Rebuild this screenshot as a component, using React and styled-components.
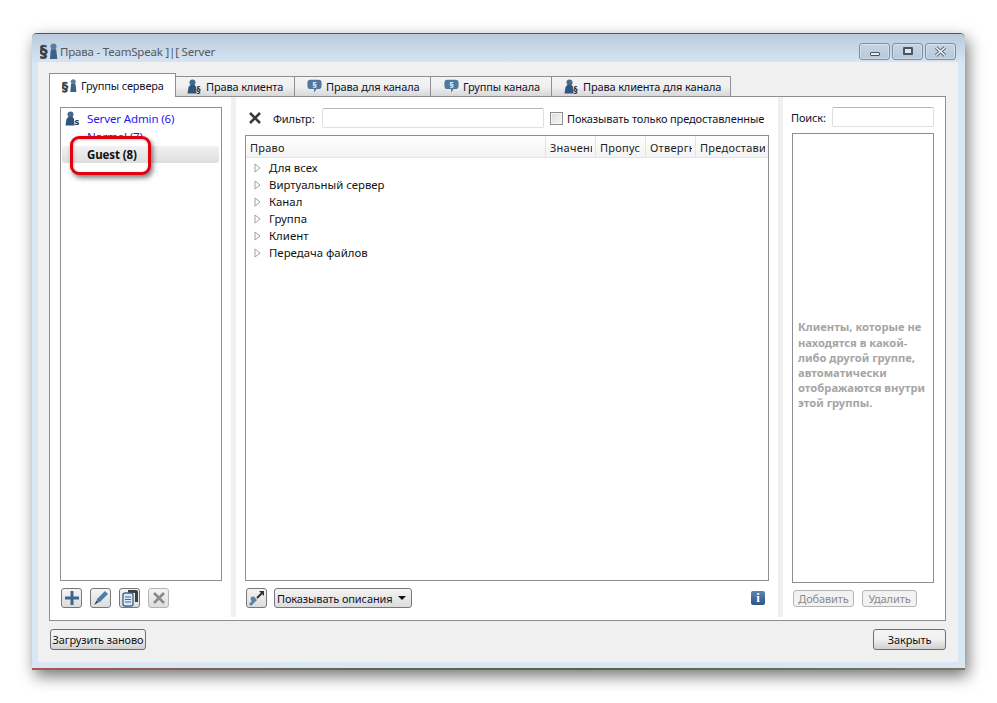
import styled, { createGlobalStyle } from 'styled-components';

const GlobalStyle = createGlobalStyle`
    html, body {
        margin: 0;
        height: 100%;
        background: #ffffff;
        overflow: hidden;
    }
    body {
        font-family: "Noto Sans", "Open Sans", sans-serif;
        font-size: 11px;
        letter-spacing: -0.12px;
        color: #10132e;
    }
`;

const SectionIcon = ({ size = 16 }) => (
    <svg width={size} height={size} viewBox="0 0 16 16">
        <text x="-0.5" y="13.5" fontFamily="DejaVu Sans" fontWeight="700" fontSize="14" fill="#3a4046" stroke="#3a4046" strokeWidth="0.4">§</text>
        <circle cx="12" cy="4" r="2.7" fill="#5a7d9f" />
        <path d="M8.8 15 L9.6 6.5 H14.4 L15.4 15 Z" fill="#3d6288" />
    </svg>
);

const UserIcon = ({ glyph = '§', size = 15 }) => (
    <svg width={size} height={size} viewBox="0 0 15 15">
        <circle cx="5.5" cy="3.5" r="3" fill="#47698c" />
        <path d="M0.5 14.5 L1.5 8 Q2.5 5.5 5.5 5.5 Q8.5 5.5 9 8 L9.6 14.5 Z" fill="#2f5680" />
        <text x="9.4" y="14" fontFamily="DejaVu Sans" fontWeight="700" fontSize="8" fill="#2b2f33">{glyph}</text>
    </svg>
);

const ChannelIcon = () => (
    <svg width={15} height={15} viewBox="0 0 18 18">
        <path d="M4 1 H14 Q17.5 1 17.5 5 V8 Q17.5 12 14 12 H11.5 L8.5 16.5 V12 H4 Q0.5 12 0.5 8 V5 Q0.5 1 4 1 Z" fill="#4f78a3" />
        <text x="9" y="10" textAnchor="middle" fontFamily="Liberation Sans" fontWeight="700" fontSize="9" fill="#ffffff">§</text>
    </svg>
);

const PlusIcon = () => (
    <svg width={16} height={16} viewBox="0 0 16 16">
        <path d="M8 1 V15 M1 8 H15" stroke="#3c6690" strokeWidth="3" />
    </svg>
);

const PenIcon = () => (
    <svg width={16} height={16} viewBox="0 0 16 16">
        <path d="M12 1 L15 4 L7 12 L3 13 L4 9 Z" fill="#4f7dab" />
        <path d="M3.4 11 L5 12.6 L1 15 Z" fill="#333333" />
    </svg>
);

const CopyIcon = () => (
    <svg width={18} height={18} viewBox="0 0 18 18">
        <path d="M7 1 H15 Q17 1 17 3 V13 H14 V4 H7 Z" fill="#3a3f44" />
        <rect x="2" y="4" width="10" height="13" rx="2" fill="#dfe8f2" stroke="#3f6a94" strokeWidth="1.4" />
        <path d="M4 8 H10 M4 10.5 H10 M4 13 H10" stroke="#3f6a94" />
    </svg>
);

const CrossIcon = ({ size = 14, color = '#3a3a3a' }) => (
    <svg width={size} height={size} viewBox="0 0 14 14">
        <path d="M2 2 L12 12 M12 2 L2 12" stroke={color} strokeWidth="2.6" />
    </svg>
);

const CloseGlyph = () => (
    <svg width={13} height={11} viewBox="0 0 13 11">
        <path d="M2 1.5 L11 9.5 M11 1.5 L2 9.5" stroke="#5a6674" strokeWidth="3.4" />
        <path d="M2 1.5 L11 9.5 M11 1.5 L2 9.5" stroke="#eef2f6" strokeWidth="1.6" />
    </svg>
);

const WrenchIcon = () => (
    <svg width={18} height={18} viewBox="0 0 18 18">
        <path d="M2 16 L8 10" stroke="#5c84ac" strokeWidth="3" />
        <circle cx="5" cy="10" r="2.4" fill="#5c84ac" />
        <path d="M9 9 L15 3" stroke="#333333" strokeWidth="2" />
        <path d="M11 2 H16 V7 Z" fill="#333333" />
    </svg>
);

const TreeArrow = () => (
    <ArrowSvg width={7} height={10} viewBox="0 0 7 10">
        <path d="M1 1 L6 5 L1 9 Z" fill="#ffffff" stroke="#a0a0a0" />
    </ArrowSvg>
);

const tabs = [
    { label: 'Группы сервера', icon: <SectionIcon size={15} />, width: 127, pad: 12, active: true },
    { label: 'Права клиента', icon: <UserIcon />, width: 119, pad: 11 },
    { label: 'Права для канала', icon: <ChannelIcon />, width: 136, pad: 12 },
    { label: 'Группы канала', icon: <ChannelIcon />, width: 121, pad: 13 },
    { label: 'Права клиента для канала', icon: <UserIcon />, width: 179, pad: 12 },
];

const groups = [
    { name: 'Server Admin (6)', icon: true },
    { name: 'Normal (7)' },
    { name: 'Guest (8)', selected: true },
];

const tree = ['Для всех', 'Виртуальный сервер', 'Канал', 'Группа', 'Клиент', 'Передача файлов'];

const columns = [
    { label: 'Право', width: 300 },
    { label: 'Значени', width: 50 },
    { label: 'Пропус', width: 50 },
    { label: 'Отвергн', width: 50 },
    { label: 'Предостави', width: 72 },
];

function App() {
    return (
        <>
            <GlobalStyle />
            <Window>
                <TitleBar>
                    <SectionIcon size={18} />
                    <Title>Права - TeamSpeak ]|[ Server</Title>
                    <Controls>
                        <ControlButton><MinGlyph /></ControlButton>
                        <ControlButton><MaxGlyph /></ControlButton>
                        <ControlButton><CloseGlyph /></ControlButton>
                    </Controls>
                </TitleBar>
                <Client>
                    <TabBar>
                        {tabs.map((tab) => (
                            <Tab key={tab.label} $active={tab.active} $width={tab.width} $pad={tab.pad}>
                                {tab.icon}
                                {tab.label}
                            </Tab>
                        ))}
                    </TabBar>
                    <TabPanel>
                        <LeftColumn>
                            <GroupList>
                                {groups.map((group) => (
                                    <GroupRow key={group.name} $selected={group.selected}>
                                        <GroupIcon>{group.icon && <UserIcon glyph="s" />}</GroupIcon>
                                        <GroupName $selected={group.selected}>{group.name}</GroupName>
                                    </GroupRow>
                                ))}
                                <Highlight />
                            </GroupList>
                            <ToolRow>
                                <ToolButton><PlusIcon /></ToolButton>
                                <ToolButton><PenIcon /></ToolButton>
                                <ToolButton><CopyIcon /></ToolButton>
                                <ToolButton $disabled><CrossIcon color="#8a8a8a" /></ToolButton>
                            </ToolRow>
                        </LeftColumn>
                        <Splitter />
                        <CenterColumn>
                            <FilterRow>
                                <CrossIcon />
                                <FilterLabel>Фильтр:</FilterLabel>
                                <TextInput $width={222} />
                                <CheckBox />
                                <span>Показывать только предоставленные</span>
                            </FilterRow>
                            <Table>
                                <TableHead>
                                    {columns.map((col) => (
                                        <HeadCell key={col.label} $width={col.width}>
                                            <HeadLabel>{col.label}</HeadLabel>
                                        </HeadCell>
                                    ))}
                                </TableHead>
                                <TreeBody>
                                    {tree.map((item) => (
                                        <TreeRow key={item}>
                                            <TreeArrow />
                                            {item}
                                        </TreeRow>
                                    ))}
                                </TreeBody>
                            </Table>
                            <CenterFooter>
                                <ToolButton><WrenchIcon /></ToolButton>
                                <DropButton>
                                    Показывать описания
                                    <DropArrow />
                                </DropButton>
                                <InfoBadge>i</InfoBadge>
                            </CenterFooter>
                        </CenterColumn>
                        <Splitter />
                        <RightColumn>
                            <SearchRow>
                                <SearchLabel>Поиск:</SearchLabel>
                                <TextInput $width={102} />
                            </SearchRow>
                            <ClientBox>
                                <Hint>Клиенты, которые не находятся в какой-либо другой группе, автоматически отображаются внутри этой группы.</Hint>
                            </ClientBox>
                            <RightFooter>
                                <SmallButton $width={61}>Добавить</SmallButton>
                                <SmallButton $width={55}>Удалить</SmallButton>
                            </RightFooter>
                        </RightColumn>
                    </TabPanel>
                    <BottomRow>
                        <PushButton $width={96}>Загрузить заново</PushButton>
                        <PushButton $width={73}>Закрыть</PushButton>
                    </BottomRow>
                </Client>
                <Desktop />
            </Window>
        </>
    );
}
export default App;

const Window = styled.div`
    width: 933px;
    height: 637px;
    margin: 33px 0 0 32px;
    display: flex;
    flex-direction: column;
    background: #d9e6f3;
    border-top: 1px solid #555555;
    border-radius: 5px 5px 0 0;
    box-sizing: border-box;
    box-shadow: 3px 6px 16px rgba(0, 0, 0, 0.55);
`;
const TitleBar = styled.div`
    height: 28px;
    box-sizing: border-box;
    display: flex;
    align-items: center;
    gap: 2px;
    padding: 6px 9px 0 8px;
    background: linear-gradient(#b9cbdc, #d6e4f2);
    border-radius: 5px 5px 0 0;
`;
const Title = styled.span`
    font-size: 11.5px;
    letter-spacing: -0.2px;
    color: #55595f;
`;
const Controls = styled.div`
    margin-left: auto;
    display: flex;
    gap: 2px;
`;
const ControlButton = styled.div`
    width: 31px;
    height: 17px;
    box-sizing: border-box;
    display: flex;
    align-items: center;
    justify-content: center;
    border: 1px solid #7d8ea3;
    border-radius: 3px;
    background: linear-gradient(#c6d5e4, #b6c8db);
    box-shadow: inset 0 0 0 1px rgba(255, 255, 255, 0.35);
`;
const MinGlyph = styled.div`
    width: 10px;
    height: 4px;
    margin-top: 5px;
    box-sizing: border-box;
    background: #e8edf2;
    border: 1px solid #4a5561;
    border-radius: 1px;
`;
const MaxGlyph = styled.div`
    width: 10px;
    height: 8px;
    box-sizing: border-box;
    border: 2px solid #4a5561;
    border-radius: 1px;
    background: #dfe7ef;
`;
const Client = styled.div`
    flex: 1;
    margin: 0 7px 0 6px;
    padding: 11px 12px 0 11px;
    background: #f0f0f0;
    display: flex;
    flex-direction: column;
`;
const TabBar = styled.div`
    height: 24px;
    display: flex;
    align-items: flex-end;
    margin-bottom: -1px;
    position: relative;
    z-index: 1;
`;
const Tab = styled.div`
    width: ${(p) => p.$width}px;
    height: ${(p) => (p.$active ? 24 : 21)}px;
    box-sizing: border-box;
    display: flex;
    align-items: center;
    gap: 4px;
    padding-left: ${(p) => p.$pad}px;
    letter-spacing: -0.15px;
    border: 1px solid #8e8f94;
    border-left-width: ${(p) => (p.$active ? 1 : 0)}px;
    border-bottom: ${(p) => (p.$active ? 'none' : '1px solid #8e8f94')};
    background: ${(p) => (p.$active ? '#ffffff' : 'linear-gradient(#f4f4f4, #f0f0f0 50%, #d8d8d8)')};
`;
const TabPanel = styled.div`
    height: 525px;
    box-sizing: border-box;
    display: flex;
    background: #ffffff;
    border: 1px solid #8e8f94;
    padding: 10px 0 3px 10px;
`;
const LeftColumn = styled.div`
    width: 162px;
    display: flex;
    flex-direction: column;
`;
const GroupList = styled.div`
    height: 474px;
    box-sizing: border-box;
    position: relative;
    border: 1px solid #8e8f94;
    padding: 1px 2px 0 1px;
`;
const GroupRow = styled.div`
    height: ${(p) => (p.$selected ? 17 : 18)}px;
    margin-top: ${(p) => (p.$selected ? 1 : 0)}px;
    display: flex;
    align-items: center;
    gap: 2px;
    font-size: 11.5px;
    color: ${(p) => (p.$selected ? '#111111' : '#1a1af0')};
    font-weight: ${(p) => (p.$selected ? 700 : 400)};
    background: ${(p) => (p.$selected ? 'linear-gradient(#f2f2f2, #dedede)' : 'transparent')};
    border-radius: 3px;
`;
const GroupIcon = styled.span`
    width: 20px;
    height: 18px;
    padding-left: 3px;
    display: flex;
    align-items: center;
`;
const GroupName = styled.span`
    position: relative;
    z-index: ${(p) => (p.$selected ? 2 : 0)};
`;
const Highlight = styled.div`
    position: absolute;
    z-index: 1;
    left: 9px;
    top: 28px;
    width: 81px;
    height: 39px;
    box-sizing: border-box;
    border: 3px solid #e3000f;
    border-radius: 9px;
    background: linear-gradient(#f2f2f2, #dedede) 0 7px / 100% 17px no-repeat, #ffffff;
    box-shadow: 2px 3px 5px rgba(0, 0, 0, 0.5), inset 1px 1px 3px rgba(0, 0, 0, 0.2);
`;
const ToolRow = styled.div`
    margin-top: 7px;
    display: flex;
    gap: 8px;
    padding-left: 1px;
`;
const ToolButton = styled.div`
    width: 21px;
    height: 20px;
    box-sizing: border-box;
    display: flex;
    align-items: center;
    justify-content: center;
    border: 1px solid ${(p) => (p.$disabled ? '#b5b5b5' : '#77787c')};
    border-radius: 3px;
    background: linear-gradient(#f4f4f4, #dcdcdc);
`;
const Splitter = styled.div`
    width: 5px;
    margin: -10px 9px 0;
    background: #f0f0f0;
`;
const CenterColumn = styled.div`
    width: 524px;
    display: flex;
    flex-direction: column;
`;
const FilterRow = styled.div`
    height: 28px;
    box-sizing: border-box;
    display: flex;
    align-items: center;
    padding: 1px 0 7px 3px;
`;
const FilterLabel = styled.span`
    width: 49px;
    margin-left: 11px;
`;
const TextInput = styled.div`
    width: ${(p) => p.$width}px;
    height: 20px;
    box-sizing: border-box;
    background: #ffffff;
    border: 1px solid #dcdfe3;
    border-top-color: #b5b7ba;
    border-radius: 2px;
`;
const CheckBox = styled.div`
    width: 13px;
    height: 13px;
    margin: 0 4px 0 6px;
    box-sizing: border-box;
    border: 1px solid #8e8f94;
    background: linear-gradient(135deg, #dcdcdc, #f6f6f6);
    box-shadow: inset 0 0 0 1px #f4f4f4;
`;
const Table = styled.div`
    height: 446px;
    box-sizing: border-box;
    border: 1px solid #8e8f94;
`;
const TableHead = styled.div`
    height: 21px;
    display: flex;
    border-bottom: 1px solid #e4e4e4;
    background: linear-gradient(#ffffff, #f3f3f3);
`;
const HeadCell = styled.div`
    width: ${(p) => p.$width}px;
    box-sizing: border-box;
    padding: 2px 3px 0 4px;
    border-right: 1px solid #e4e4e4;
    color: #222222;
    letter-spacing: 0.25px;
    &:last-child {
        border-right: none;
    }
`;
const HeadLabel = styled.div`
    height: 19px;
    line-height: 20px;
    overflow: hidden;
    white-space: nowrap;
`;
const TreeBody = styled.div`
    padding-top: 1px;
`;
const TreeRow = styled.div`
    height: 17px;
    display: flex;
    align-items: center;
    padding-left: 8px;
    font-size: 11.4px;
    letter-spacing: 0;
    color: #111111;
`;
const ArrowSvg = styled.svg`
    margin-right: 8px;
`;
const CenterFooter = styled.div`
    margin-top: 7px;
    display: flex;
    align-items: center;
    gap: 7px;
    padding-left: 1px;
`;
const DropButton = styled.div`
    width: 138px;
    height: 20px;
    box-sizing: border-box;
    display: flex;
    align-items: center;
    justify-content: space-between;
    padding: 0 5px 0 2px;
    border: 1px solid #77787c;
    border-radius: 3px;
    background: linear-gradient(#f4f4f4, #dcdcdc);
`;
const DropArrow = styled.span`
    width: 0;
    height: 0;
    border-style: solid;
    border-width: 4px 4px 0;
    border-color: #111111 transparent transparent;
`;
const InfoBadge = styled.div`
    margin-left: auto;
    margin-right: 4px;
    width: 14px;
    height: 14px;
    border-radius: 2px;
    background: linear-gradient(#5b85b3, #2d5686);
    color: #ffffff;
    font-family: "Liberation Serif", serif;
    font-weight: 700;
    font-size: 13px;
    line-height: 14px;
    text-align: center;
`;
const RightColumn = styled.div`
    width: 142px;
    display: flex;
    flex-direction: column;
`;
const SearchRow = styled.div`
    height: 26px;
    display: flex;
    align-items: flex-start;
    justify-content: space-between;
    line-height: 20px;
`;
const SearchLabel = styled.span`
    margin-top: 1px;
    margin-left: -1px;
`;
const ClientBox = styled.div`
    height: 450px;
    box-sizing: border-box;
    border: 1px solid #8e8f94;
    display: flex;
    align-items: center;
    padding: 14px 5px 0;
`;
const Hint = styled.div`
    color: #a5a5a5;
    font-size: 11.2px;
    font-weight: 700;
    line-height: 15.2px;
    letter-spacing: 0;
`;
const RightFooter = styled.div`
    margin-top: 7px;
    display: flex;
    gap: 8px;
    padding-left: 1px;
`;
const SmallButton = styled.div`
    width: ${(p) => p.$width}px;
    height: 17px;
    box-sizing: border-box;
    line-height: 15px;
    text-align: center;
    color: #8a8a8a;
    border: 1px solid #b5b5b5;
    border-radius: 3px;
    background: #f2f2f2;
`;
const BottomRow = styled.div`
    margin: 8px 0 0 1px;
    display: flex;
    justify-content: space-between;
`;
const PushButton = styled.div`
    width: ${(p) => p.$width}px;
    height: 21px;
    box-sizing: border-box;
    line-height: 19px;
    text-align: center;
    color: #111111;
    border: 1px solid #6e6f73;
    border-radius: 3px;
    background: linear-gradient(#f4f4f4, #f0f0f0 50%, #d0d0d0);
`;
const Desktop = styled.div`
    margin-top: 6px;
    height: 2px;
    background: linear-gradient(90deg, #a55, #665 30%, #564 60%, #776);
`;
